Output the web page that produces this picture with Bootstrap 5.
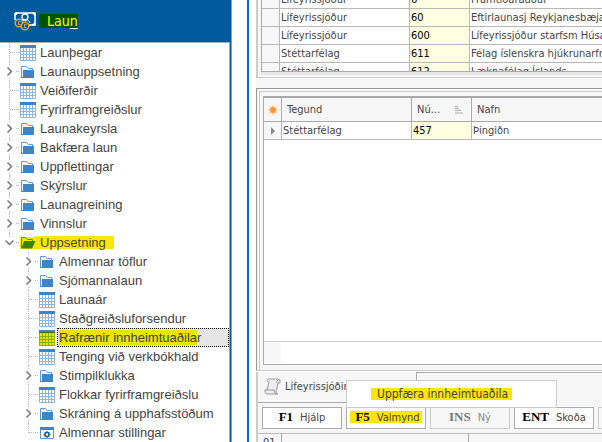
<!DOCTYPE html>
<html lang="is">
<head>
<meta charset="utf-8">
<meta name="viewport" content="width=device-width, initial-scale=1">
<title>Laun</title>
<link href="https://cdn.jsdelivr.net/npm/bootstrap@5.3.0/dist/css/bootstrap.min.css" rel="stylesheet">
<style>
html, body { height: 100%; }
body { font: 11px/18px "DejaVu Sans Condensed", "Noto Sans", sans-serif; color: #444; }
a { color: inherit; text-decoration: none; }
.side { width: 232px; border-right: 1px solid #8c9dad; background: #005a9e; }
.side-head { height: 42px; padding-left: 14px; color: #ff0; font-size: 14px; }
.side-head .title { background: #005400; padding-left: 8px; height: 14px; line-height: 14px; margin-left: 3px; }
.side-head u { text-underline-offset: 2px; text-decoration-color: #fff; }
.tree { font: 13px/19px "Liberation Sans", Arial, sans-serif; background: #fff; border-top: 1px solid #aaa; border-right: 1px solid #aaa; margin-right: 1px; }
.tree ul { list-style: none; margin: 0; padding: 0; }
.tree ul ul { padding-left: 19px; }
.tree li { position: relative; }
.tree li::before { content: ""; position: absolute; left: 9px; top: 0; bottom: 0; border-left: 1px dotted #bbb; }
.tree li:last-child::before { bottom: auto; height: 10px; }
.node { position: relative; height: 19px; padding-left: 20px; }
.node::before { content: ""; position: absolute; left: 10px; top: 9px; width: 9px; border-top: 1px dotted #bbb; }
.node .ico { width: 16px; height: 16px; flex: none; }
.node .lbl { padding-left: 4px; color: #444; white-space: nowrap; }
.node .tog { position: absolute; left: 4px; top: 4px; width: 11px; height: 11px; padding: 0; border: 0; background: #fff; line-height: 0; }
.hl { background: #ffe600; }
.node .open-lbl { padding-right: 8px; height: 13px; line-height: 13px; }
.node .sel { outline: 1px dotted #000; outline-offset: -1px; background: #e6e6e6; padding-left: 2px; margin-left: 2px; }
.sel .mark-text { background: #e6e600; }
.gutter { width: 15px; }
.work { border-left: 2px solid #0072c6; padding-left: 7px; }
.pane { background: #f7f7f7; border-left: 2px solid #ccc; }
.upper { height: 78px; border-bottom: 1px solid #ccc; padding-left: 3px; }
.clip { height: 72px; border: solid #aaa; border-width: 0 0 1px 1px; box-shadow: 0 3px 0 #e8e8e8; }
.grid { table-layout: fixed; width: 480px; border-collapse: separate; border-spacing: 0; margin: 0; color: #444; }
.grid td, .grid th { height: 18px; padding: 0 0 0 1px; line-height: 17px; border: solid #b8b8b8; border-width: 0 1px 1px 0; white-space: nowrap; overflow: hidden; font-weight: 400; background: #fff; }
.grid .ind { background: #f7f7f7; text-align: center; padding: 0; }
.grid .num { background: #ffffe1; color: #000; }
.grid th, .grid th.ind { background: #f7f7f7; height: 24px; padding-left: 5px; border-color: #aaa; }
.grid th.ind { padding: 0; }
.pull { margin-top: -9px; }
.between { height: 10px; background: #f7f7f7; }
.lower { border-top: 1px solid #999; border-left: 1px solid #999; padding: 7px 0 5px 6px; box-shadow: inset 2px 2px 0 #f7f7f7, inset 3px 3px 0 #ccc; height: 283px; border-bottom: 1px solid #ccc; }
.sheet { border: solid #aaa; border-width: 2px 0 1px 1px; background: #fff; }
.foot { height: 23px; border-top: 1px solid #ccc; padding: 1px 0; }
.foot-ind { width: 17px; background: #f7f7f7; }
.tabs { height: 31px; margin-top: 1px; }
.tab-on { width: 159px; border: solid #aaa; border-width: 0 1px 1px 0; padding-left: 6px; }
.tab-rest { border-top: 1px solid #aaa; }
.cmds { padding: 4px 0 4px 4px; gap: 4px; overflow: hidden; }
.cmd { width: 80px; height: 22px; flex: none; border: 1px solid #aaa; background: #fff; color: #444; padding: 0; line-height: 20px; white-space: nowrap; }
.cmd kbd { font: bold 13px/18px "Liberation Serif", "Times New Roman", serif; color: #000; background: none; padding: 0; margin-right: 7px; }
.cmd:disabled { background: #f7f7f7; border-color: #ccc; color: #888; }
.cmd:disabled kbd { color: #777; }
.cmd .hl { padding: 0 2px 0 5px; height: 12px; line-height: 12px; }
.cmd .hl kbd { line-height: 12px; }
.status { border-top: 1px solid #bbb; }
.status .n { width: 24px; border-right: 1px solid #aaa; padding-left: 5px; }
.status .m { width: 187px; border-right: 1px solid #aaa; }
.menu-pop { left: 88px; bottom: -5px; width: 211px; height: 28px; background: #fff; border: 1px solid #ccc; padding-left: 24px; z-index: 2; }
.menu-pop a { line-height: 12px; height: 12px; padding: 0 4px 0 6px; font-size: 12px; }
</style>
<script src="https://cdn.jsdelivr.net/npm/bootstrap@5.3.0/dist/js/bootstrap.bundle.min.js"></script>
</head>
<body class="d-flex overflow-hidden">
<svg class="d-none">
  <symbol id="cal" viewBox="0 0 16 16"><path fill="#fff" d="M0 0h16v16H0z"/><path d="M.5 3v12.500h15V3M3.500 3v13M6.500 3v13M9.500 3v13M12.500 3v13M0 6.500h16M0 9.500h16M0 12.500h16" fill="none" stroke="#8ab6df"/><path fill="#3d85c6" d="M0 0h16v3H0z"/></symbol>
  <symbol id="calhl" viewBox="0 0 16 16"><path fill="#e6e600" d="M0 0h16v16H0z"/><path d="M.5 3v12.500h15V3M3.500 3v13M6.500 3v13M9.500 3v13M12.500 3v13M0 6.500h16M0 9.500h16M0 12.500h16" fill="none" stroke="#8fae00"/><path fill="#3d85c6" d="M0 0h16v2H0z"/><path fill="#357500" d="M0 2h16v1H0z"/></symbol>
  <symbol id="fold" viewBox="0 0 16 16"><path d="M1.500 13V2.500h5l2 2h4V6" fill="none" stroke="#5b9bd5"/><path fill="#3d85c6" d="M3 6h11v8H1v-1h2z"/></symbol>
  <symbol id="foldo" viewBox="0 0 16 16"><path fill="#ffe600" d="M0 2h16v12H0z"/><path d="M1.500 13V2.500h4l2 2h5V6" fill="none" stroke="#4c9a00"/><path fill="#3b8500" d="M4 6h11.500L12 13.500H1z"/></symbol>
  <symbol id="gear" viewBox="0 0 16 16"><path d="M1.500 2.500h13v11h-13z" fill="#fff" stroke="#5b9bd5"/><path fill="#3d85c6" d="M1 2h14v3H1z"/><circle cx="8" cy="9.500" r="2" fill="none" stroke="#1c5c9c" stroke-width="1.600"/><path d="M8 6v7M4.500 9.500h7M5.500 7l5 5M10.500 7l-5 5" stroke="#1c5c9c"/><circle cx="8" cy="9.500" r="1.200" fill="#fff"/></symbol>
  <symbol id="chr" viewBox="0 0 11 11"><path d="M3.500 1.500l4 4-4 4" fill="none" stroke="#777" stroke-width="1.500"/></symbol>
  <symbol id="chd" viewBox="0 0 11 11"><path d="M1.500 3.500l4 4 4-4" fill="none" stroke="#777" stroke-width="1.500"/></symbol>
</svg>
<aside class="side d-flex flex-column flex-shrink-0">
  <header class="side-head d-flex align-items-center">
    <svg width="22" height="20" viewBox="0 0 22 20"><path d="M1 2h20v12h-7M1 2v7" fill="none" stroke="#fff" stroke-width="1.500"/><path d="M1 2h3L1 5zM21 2h-3l3 3zM21 14h-3l3-3z" fill="#fff" stroke="#fff"/><circle cx="11" cy="6" r="3" fill="none" stroke="#fff" stroke-width="1.300"/><path d="M6 11q2-3 5-2 4-1 5 3" fill="none" stroke="#fff"/><g fill="#005a9e" stroke="#e0a04a" stroke-width="1.500"><circle cx="5" cy="12" r="3.800"/><circle cx="11" cy="15" r="3.800"/></g><path d="M6.500 10.500h-2v3h2M12.500 13.500h-2v3h2" fill="none" stroke="#e0a04a"/></svg>
    <span class="title">Lau<u>n</u></span>
  </header>
  <nav class="tree flex-grow-1" aria-label="Laun">
    <ul>
      <li><div class="node d-flex align-items-center"><svg class="ico"><use href="#cal"/></svg><a class="lbl" href="#">Launþegar</a></div></li>
      <li><div class="node d-flex align-items-center"><button class="tog" aria-label="Opna Launauppsetning"><svg width="11" height="11"><use href="#chr"/></svg></button><svg class="ico"><use href="#fold"/></svg><a class="lbl" href="#">Launauppsetning</a></div></li>
      <li><div class="node d-flex align-items-center"><svg class="ico"><use href="#cal"/></svg><a class="lbl" href="#">Veiðiferðir</a></div></li>
      <li><div class="node d-flex align-items-center"><svg class="ico"><use href="#cal"/></svg><a class="lbl" href="#">Fyrirframgreiðslur</a></div></li>
      <li><div class="node d-flex align-items-center"><button class="tog" aria-label="Opna Launakeyrsla"><svg width="11" height="11"><use href="#chr"/></svg></button><svg class="ico"><use href="#fold"/></svg><a class="lbl" href="#">Launakeyrsla</a></div></li>
      <li><div class="node d-flex align-items-center"><button class="tog" aria-label="Opna Bakfæra laun"><svg width="11" height="11"><use href="#chr"/></svg></button><svg class="ico"><use href="#fold"/></svg><a class="lbl" href="#">Bakfæra laun</a></div></li>
      <li><div class="node d-flex align-items-center"><button class="tog" aria-label="Opna Uppflettingar"><svg width="11" height="11"><use href="#chr"/></svg></button><svg class="ico"><use href="#fold"/></svg><a class="lbl" href="#">Uppflettingar</a></div></li>
      <li><div class="node d-flex align-items-center"><button class="tog" aria-label="Opna Skýrslur"><svg width="11" height="11"><use href="#chr"/></svg></button><svg class="ico"><use href="#fold"/></svg><a class="lbl" href="#">Skýrslur</a></div></li>
      <li><div class="node d-flex align-items-center"><button class="tog" aria-label="Opna Launagreining"><svg width="11" height="11"><use href="#chr"/></svg></button><svg class="ico"><use href="#fold"/></svg><a class="lbl" href="#">Launagreining</a></div></li>
      <li><div class="node d-flex align-items-center"><button class="tog" aria-label="Opna Vinnslur"><svg width="11" height="11"><use href="#chr"/></svg></button><svg class="ico"><use href="#fold"/></svg><a class="lbl" href="#">Vinnslur</a></div></li>
      <li><div class="node d-flex align-items-center"><button class="tog" aria-label="Loka Uppsetning"><svg width="11" height="11"><use href="#chd"/></svg></button><svg class="ico"><use href="#foldo"/></svg><a class="lbl hl open-lbl" href="#">Uppsetning</a></div>
        <ul>
          <li><div class="node d-flex align-items-center"><button class="tog" aria-label="Opna Almennar töflur"><svg width="11" height="11"><use href="#chr"/></svg></button><svg class="ico"><use href="#fold"/></svg><a class="lbl" href="#">Almennar töflur</a></div></li>
          <li><div class="node d-flex align-items-center"><button class="tog" aria-label="Opna Sjómannalaun"><svg width="11" height="11"><use href="#chr"/></svg></button><svg class="ico"><use href="#fold"/></svg><a class="lbl" href="#">Sjómannalaun</a></div></li>
          <li><div class="node d-flex align-items-center"><svg class="ico"><use href="#cal"/></svg><a class="lbl" href="#">Launaár</a></div></li>
          <li><div class="node d-flex align-items-center"><svg class="ico"><use href="#cal"/></svg><a class="lbl" href="#">Staðgreiðsluforsendur</a></div></li>
          <li><div class="node d-flex align-items-center"><svg class="ico"><use href="#calhl"/></svg><a class="lbl sel flex-grow-1" href="#"><span class="mark-text">Rafrænir innheimtuaðila</span>r</a></div></li>
          <li><div class="node d-flex align-items-center"><svg class="ico"><use href="#cal"/></svg><a class="lbl" href="#">Tenging við verkbókhald</a></div></li>
          <li><div class="node d-flex align-items-center"><button class="tog" aria-label="Opna Stimpilklukka"><svg width="11" height="11"><use href="#chr"/></svg></button><svg class="ico"><use href="#fold"/></svg><a class="lbl" href="#">Stimpilklukka</a></div></li>
          <li><div class="node d-flex align-items-center"><svg class="ico"><use href="#cal"/></svg><a class="lbl" href="#">Flokkar fyrirframgreiðslu</a></div></li>
          <li><div class="node d-flex align-items-center"><button class="tog" aria-label="Opna Skráning á upphafsstöðum"><svg width="11" height="11"><use href="#chr"/></svg></button><svg class="ico"><use href="#fold"/></svg><a class="lbl" href="#">Skráning á upphafsstöðum</a></div></li>
          <li><div class="node d-flex align-items-center"><svg class="ico"><use href="#gear"/></svg><a class="lbl" href="#">Almennar stillingar</a></div></li>
        </ul>
      </li>
    </ul>
  </nav>
</aside>
<div class="gutter flex-shrink-0"></div>
<main class="work flex-grow-1 overflow-hidden">
  <div class="pane upper">
    <div class="clip overflow-hidden">
      <table class="grid pull">
        <colgroup><col style="width:18px"><col style="width:130px"><col style="width:60px"><col></colgroup>
        <tbody>
          <tr><td class="ind"></td><td>Lífeyrissjóður</td><td class="num">6</td><td>Framtíðarauður</td></tr>
          <tr><td class="ind"></td><td>Lífeyrissjóður</td><td class="num">60</td><td>Eftirlaunasj Reykjanesbæjar</td></tr>
          <tr><td class="ind"></td><td>Lífeyrissjóður</td><td class="num">600</td><td>Lífeyrissjóður starfsm Húsav</td></tr>
          <tr><td class="ind"></td><td>Stéttarfélag</td><td class="num">611</td><td>Félag íslenskra hjúkrunarfræðinga</td></tr>
          <tr><td class="ind"></td><td>Stéttarfélag</td><td class="num">612</td><td>Læknafélag Íslands</td></tr>
        </tbody>
      </table>
    </div>
  </div>
  <div class="between"></div>
  <div class="pane lower">
    <div class="sheet h-100 overflow-hidden d-flex flex-column justify-content-between">
      <table class="grid">
        <colgroup><col style="width:18px"><col style="width:130px"><col style="width:60px"><col></colgroup>
        <thead><tr>
          <th class="ind"><svg width="10" height="10" viewBox="0 0 10 10"><path d="M5 0v10M0 5h10M1.500 1.500l7 7M8.500 1.500l-7 7" stroke="#ffb066"/><circle cx="5" cy="5" r="3" fill="#ff9232"/></svg></th>
          <th>Tegund</th>
          <th><span class="d-flex align-items-center justify-content-between pe-2">Nú... <svg width="8" height="8" viewBox="0 0 8 8"><path d="M0 .5h3M0 2.500h4M0 4.500h6M0 7h8" stroke="#aaa"/></svg></span></th>
          <th>Nafn</th>
        </tr></thead>
        <tbody><tr><td class="ind"><svg width="4" height="8" viewBox="0 0 4 8"><path d="M0 0l4 4-4 4z" fill="#888"/></svg></td><td>Stéttarfélag</td><td class="num">457</td><td>Þingiðn</td></tr></tbody>
      </table>
      <div class="foot"><div class="foot-ind h-100"></div></div>
    </div>
  </div>
  <div class="pane">
    <div class="tabs d-flex position-relative">
      <a class="tab-on d-flex align-items-center gap-1 overflow-hidden text-nowrap" href="#"><svg class="flex-shrink-0" width="17" height="18" viewBox="0 0 17 18"><path d="M4 1h10q3 0 2 4h-2l-2 9q0 2 2 2H3q-3-1-2-4h2l2-8Q2 4 4 1z" fill="#eee" stroke="#999"/><path d="M14 2q-2 1-1 3M2 12h8q0 3 2 4" fill="none" stroke="#999"/></svg>Lífeyrissjóðir</a>
      <div class="tab-rest flex-grow-1"></div>
      <div class="menu-pop position-absolute d-flex align-items-center"><a class="hl" href="#">Uppfæra innheimtuaðila</a></div>
    </div>
    <div class="cmds d-flex">
      <button class="cmd"><kbd>F1</kbd>Hjálp</button>
      <button class="cmd"><span class="hl d-inline-block"><kbd>F5</kbd>Valmynd</span></button>
      <button class="cmd" disabled><kbd>INS</kbd>Ný</button>
      <button class="cmd"><kbd>ENT</kbd>Skoða</button>
      <button class="cmd" disabled aria-label="Skipun"></button>
    </div>
    <div class="status d-flex"><div class="n">01</div><div class="m"></div></div>
  </div>
</main>
</body>
</html>
